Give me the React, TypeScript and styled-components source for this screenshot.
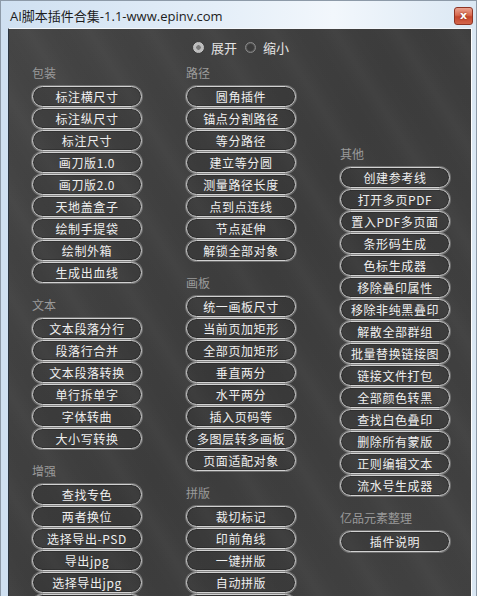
import React from 'react';
import styled, { createGlobalStyle } from 'styled-components';

type Section = { title: string; items: string[] };
type Column = { offset: number; sections: Section[] };

// an empty label is a button that the window cuts off at the bottom edge
const columns: Column[] = [
	{
		offset: 0,
		sections: [
			{
				title: '包装',
				items: ['标注横尺寸', '标注纵尺寸', '标注尺寸', '画刀版1.0', '画刀版2.0', '天地盖盒子', '绘制手提袋', '绘制外箱', '生成出血线'],
			},
			{
				title: '文本',
				items: ['文本段落分行', '段落行合并', '文本段落转换', '单行拆单字', '字体转曲', '大小写转换'],
			},
			{
				title: '增强',
				items: ['查找专色', '两者换位', '选择导出-PSD', '导出jpg', '选择导出jpg', ''],
			},
		],
	},
	{
		offset: 0,
		sections: [
			{
				title: '路径',
				items: ['圆角插件', '锚点分割路径', '等分路径', '建立等分圆', '测量路径长度', '点到点连线', '节点延伸', '解锁全部对象'],
			},
			{
				title: '画板',
				items: ['统一画板尺寸', '当前页加矩形', '全部页加矩形', '垂直两分', '水平两分', '插入页码等', '多图层转多画板', '页面适配对象'],
			},
			{
				title: '拼版',
				items: ['裁切标记', '印前角线', '一键拼版', '自动拼版', ''],
			},
		],
	},
	{
		offset: 81,
		sections: [
			{
				title: '其他',
				items: [
					'创建参考线',
					'打开多页PDF',
					'置入PDF多页面',
					'条形码生成',
					'色标生成器',
					'移除叠印属性',
					'移除非纯黑叠印',
					'解散全部群组',
					'批量替换链接图',
					'链接文件打包',
					'全部颜色转黑',
					'查找白色叠印',
					'删除所有蒙版',
					'正则编辑文本',
					'流水号生成器',
				],
			},
			{
				title: '亿品元素整理',
				items: ['插件说明'],
			},
		],
	},
];

const App: React.FunctionComponent = () => {
	return (
		<>
			<GlobalStyle />
			<Window>
				<TitleBar>
					<Title>AI脚本插件合集-1.1-www.epinv.com</Title>
					<CloseButton>x</CloseButton>
				</TitleBar>
				<Panel>
					<RadioRow>
						<RadioOption>
							<RadioDot checked />
							<RadioLabel>展开</RadioLabel>
						</RadioOption>
						<RadioOption>
							<RadioDot />
							<RadioLabel>缩小</RadioLabel>
						</RadioOption>
					</RadioRow>
					<Columns>
						{columns.map((col, i) => (
							<ColumnBox key={i} offset={col.offset}>
								{col.sections.map(sec => (
									<SectionBox key={sec.title}>
										<Heading>{sec.title}</Heading>
										<ButtonList>
											{sec.items.map((item, j) => (
												<PillButton key={j}>{item}</PillButton>
											))}
										</ButtonList>
									</SectionBox>
								))}
							</ColumnBox>
						))}
					</Columns>
				</Panel>
			</Window>
		</>
	);
};

const GlobalStyle = createGlobalStyle`
	html, body {
		margin: 0;
		padding: 0;
		height: 100%;
		overflow: hidden;
	}
	#root {
		height: 100%;
	}
`;

/* ************** Window frame ************** */
const Window = styled.div`
	box-sizing: border-box;
	display: flex;
	flex-direction: column;
	height: 100vh;
	width: 100vw;
	overflow: hidden;
	border: 1px solid #8d9aa8;
	border-bottom: none;
	background: linear-gradient(to right, #cfe0f1 0%, #e4eef8 45%, #f2f7fc 70%, #dbe8f4 100%);
	font-family: 'Noto Sans CJK SC', 'Noto Sans', sans-serif;
`;

const TitleBar = styled.div`
	display: flex;
	align-items: center;
	justify-content: space-between;
	height: 27px;
	padding: 0 3px 0 9px;
	flex-shrink: 0;
`;

const Title = styled.span`
	font-family: 'Open Sans', 'Noto Sans CJK SC', sans-serif;
	font-size: 13px;
	color: #1c1c1c;
	padding-top: 2px;
`;

const CloseButton = styled.div`
	display: flex;
	align-items: center;
	justify-content: center;
	box-sizing: border-box;
	width: 19px;
	height: 18px;
	margin-top: 2px;
	border: 1px solid #8e3424;
	border-radius: 3px;
	background: linear-gradient(#eaa28f 0%, #d8694f 45%, #c4462d 55%, #d3664c 100%);
	color: #fff;
	font-family: 'DejaVu Sans', sans-serif;
	font-weight: 700;
	font-size: 11px;
	line-height: 1;
	text-shadow: 0 0 2px #7a2010;
`;

/* ************** Panel ************** */
const Panel = styled.div`
	flex: 1;
	margin: 0 4px 0 7px;
	border-top: 1px solid #f4f7fb;
	border-left: 1px solid #2b3540;
	border-right: 1px solid #ffffff;
	background-color: #414141;
	background-image: repeating-linear-gradient(
			58deg,
			rgba(255, 255, 255, 0) 0px,
			rgba(255, 255, 255, 0.022) 14px,
			rgba(255, 255, 255, 0) 28px,
			rgba(0, 0, 0, 0.025) 40px,
			rgba(0, 0, 0, 0) 52px
		),
		linear-gradient(120deg, #464646 0%, #3d3d3d 50%, #424242 100%);
`;

const RadioRow = styled.div`
	display: flex;
	justify-content: center;
	align-items: center;
	gap: 8px;
	height: 36px;
	padding-left: 2px;
`;

const RadioOption = styled.label`
	display: flex;
	align-items: center;
	gap: 7px;
`;

const RadioDot = styled.span<{ checked?: boolean }>`
	box-sizing: border-box;
	width: 11px;
	height: 11px;
	border-radius: 50%;
	border: 1px solid ${props => (props.checked ? '#c9c9c9' : '#8a8a8a')};
	background: ${props =>
		props.checked
			? 'radial-gradient(circle, #7a7a7a 0 2px, #bdbdbd 2.5px 100%)'
			: 'radial-gradient(circle, #3a3a3a 0 3px, #555 4px 100%)'};
`;

const RadioLabel = styled.span`
	font-size: 13px;
	color: #e4e4e4;
	line-height: 1;
`;

/* ************** Columns ************** */
const Columns = styled.div`
	display: grid;
	grid-template-columns: repeat(3, 110px);
	column-gap: 44px;
	padding-left: 23px;
	align-items: start;
`;

const ColumnBox = styled.div<{ offset: number }>`
	display: flex;
	flex-direction: column;
	gap: 14px;
	margin-top: ${props => props.offset}px;
`;

const SectionBox = styled.div`
	display: flex;
	flex-direction: column;
`;

const Heading = styled.div`
	height: 16px;
	line-height: 16px;
	margin-bottom: 5px;
	font-size: 12px;
	color: #9a9a9a;
`;

const ButtonList = styled.div`
	display: flex;
	flex-direction: column;
	gap: 1px;
`;

const PillButton = styled.div`
	box-sizing: border-box;
	display: flex;
	align-items: center;
	justify-content: center;
	height: 21px;
	border: 1px solid #d2d2d2;
	border-radius: 11px;
	background: rgba(0, 0, 0, 0.05);
	box-shadow: 0 0 0 1px rgba(150, 150, 150, 0.55), inset 0 0 0 1px rgba(0, 0, 0, 0.2);
	color: #efefef;
	font-size: 12px;
	letter-spacing: 0.6px;
	white-space: nowrap;
	cursor: pointer;
`;

export default App;
